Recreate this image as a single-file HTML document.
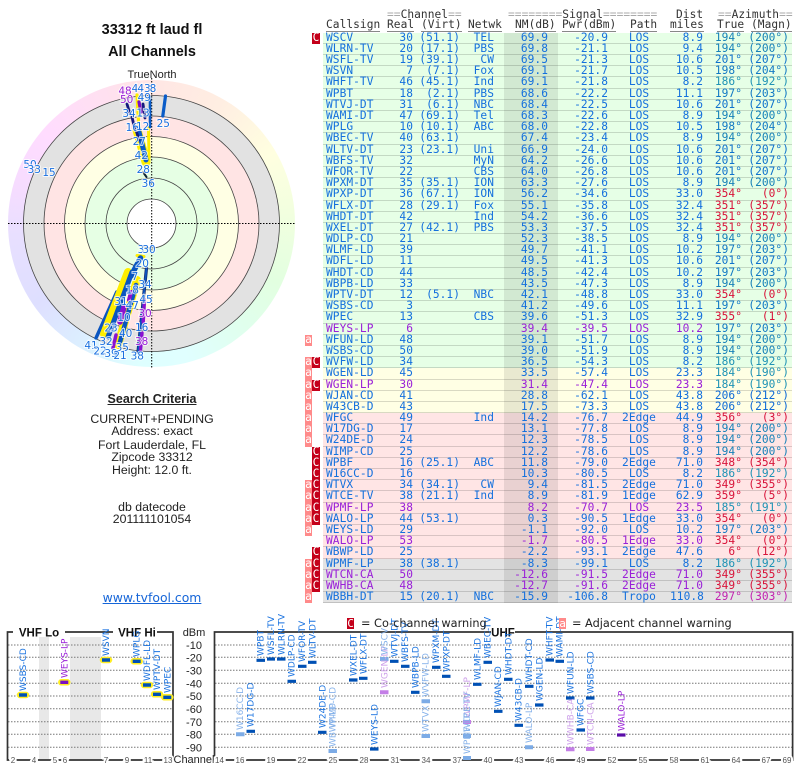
<!DOCTYPE html>
<html><head><meta charset="utf-8"><title>33312 ft laud fl</title>
<style>
html,body{margin:0;padding:0;background:#fff}
#p{position:relative;width:800px;height:768px;overflow:hidden;background:#fff;font-family:"Liberation Sans",sans-serif}
.t{position:absolute;left:0;width:304px;text-align:center;color:#222;font-size:12.3px;line-height:14px;white-space:nowrap}
.h1{font-weight:bold;font-size:14.5px;line-height:18px;color:#111}
#rim{position:absolute;left:8px;top:80px;width:287px;height:287px;border-radius:50%;background:conic-gradient(#ffe6e4,#ffeee2 30deg,#ffffe0 60deg,#f2ffdf 85deg,#e2ffe0 115deg,#e0ffee 140deg,#e0ffff 165deg,#deffff 185deg,#dcefff 210deg,#dedfff 235deg,#e8dfff 265deg,#f6dcff 285deg,#ffdcff 310deg,#ffe0f0 340deg,#ffe6e4)}
svg{position:absolute;left:0;top:0}
#tb{position:absolute;left:323px;top:32.7px;width:469px;font:11.2px/10.5px "DejaVu Sans Mono","Liberation Mono",monospace;letter-spacing:.05px;color:#1470dd}
.r{position:relative;display:grid;grid-template-columns:62px 28px 47px 44px 54px 50px 62px 33px 39px 47px 3px;height:11.19px;box-sizing:border-box;box-shadow:inset 0 -1px rgba(0,0,0,.15);background:#e6ffe6;white-space:nowrap}
.r i{font-style:normal;text-align:right;display:block;height:11.19px;line-height:10.8px}
.r i:nth-of-type(1){text-align:left;padding-left:3px}
.r i:nth-of-type(4){padding-right:10px}
.r i:nth-of-type(5){padding-right:10px;background:rgba(0,0,0,.085)}
.r i:nth-of-type(7){text-align:center}
.y{background:#ffffe4}.k{background:#ffe5e5}.g{background:#e3e3e3}
.p i{color:#9a20d8}
.r i.a1{color:#1f93b5}.r i.a2{color:#1681b8}.r i.a3{color:#1279c4}.r i.a4{color:#0f72cc}.r i.a5{color:#106ad6}.r i.rd{color:#d8143a}.r i.mg{color:#c222b0}
.r u{position:absolute;top:0;height:11.19px;text-decoration:none;color:#fff;text-align:center;line-height:10.8px;width:7px}
.r u.a{left:-18px;background:#ff8a8a}
.r u.c{left:-11px;background:#c4001a;width:8px}
.hd{position:absolute;font:11.2px/12px "DejaVu Sans Mono","Liberation Mono",monospace;letter-spacing:.05px;color:#333;white-space:pre}
.hd s{text-decoration:none;color:#aaa}
.ul{border-bottom:1px solid #888;height:12px}
.lb{font:10.5px "DejaVu Sans",sans-serif;fill:#1a70e0;stroke:#fff;stroke-width:2px;stroke-opacity:.75;paint-order:stroke;text-anchor:middle}
.pl{fill:#9a20d8}
.l{font:9px "DejaVu Sans",sans-serif;fill:#1a73e0}
.lp{fill:#9a20d8}
.ll{fill:#86b2ea}
.lq{fill:#cda0ea}
.ax{font:8px "Liberation Sans",sans-serif;fill:#555;stroke:#fff;stroke-width:4px;paint-order:stroke;text-anchor:middle}
.db{font:11px "Liberation Sans",sans-serif;fill:#222;text-anchor:middle}
.ti{font:bold 11.5px "Liberation Sans",sans-serif;fill:#111;text-anchor:middle}
.lg{position:absolute;font:11.3px/12px "DejaVu Sans",sans-serif;color:#222;white-space:pre}
.bx{position:absolute;color:#fff;font:11px/11px "DejaVu Sans Mono",monospace;text-align:center}
</style></head><body><div id="p">

<div class="t h1" style="top:21px">33312 ft laud fl</div>
<div class="t h1" style="top:43px">All Channels</div>
<div class="t" style="top:68px;font-size:11px">TrueNorth</div>

<div id="rim"></div>
<svg width="310" height="380" viewBox="0 0 310 380">
<g fill="none" stroke="#444" stroke-width=".8">
<circle cx="151.5" cy="223.5" r="128" fill="#e2e2e2"/>
<circle cx="151.5" cy="223.5" r="107.5" fill="#ffe4e4"/>
<circle cx="151.5" cy="223.5" r="87" fill="#ffffe4"/>
<circle cx="151.5" cy="223.5" r="66.5" fill="#e6ffe4"/>
<circle cx="151.5" cy="223.5" r="45.5" fill="#e6ffe4"/>
<circle cx="151.5" cy="223.5" r="24.5" fill="#fff"/>
</g>
<path d="M8 223.5H296M151.7 78V368" stroke="#000" stroke-width="1" stroke-dasharray="1.5 1.5" fill="none"/>
<!-- upper beams -->
<g fill="none" stroke-linecap="round">
<path d="M137 95L139 130" stroke="#ffee00" stroke-width="3.2"/>
<path d="M137 130L146 162" stroke="#ffee00" stroke-width="9"/>
<path d="M148.500 128L149 160" stroke="#ffee00" stroke-width="3"/>
<path d="M138 128L146 160" stroke="#0a5cc8" stroke-width="5"/>
<path d="M150 97L150 127" stroke="#0a5cc8" stroke-width="2.6"/>
<path d="M165.500 96L162.800 116" stroke="#0a5cc8" stroke-width="3.2"/>
<path d="M127 104L130 114M132 117L135 130M143 104L145 118M136 130L139 140" stroke="#141a80" stroke-width="2.8"/>
<path d="M139 102L141 112" stroke="#7a10c0" stroke-width="3.2"/>
<path d="M143 172L146.500 177" stroke="#123" stroke-width="2"/>
</g>
<!-- lower beams -->
<g fill="none" stroke-linecap="round">
<path d="M116.700 292L96 338" stroke="#0a55c0" stroke-width="3.4"/>
<path d="M128 272L104 334" stroke="#ffee00" stroke-width="8"/>
<path d="M137 255.500L144 256.500" stroke="#ffee00" stroke-width="3"/>
<path d="M140.500 258L131 276" stroke="#0a55c0" stroke-width="5.500"/>
<path d="M132 272L108 337" stroke="#0a55c0" stroke-width="5"/>
<path d="M137 280L118 345" stroke="#ffee00" stroke-width="8"/>
<path d="M136 285L120 342" stroke="#0a55c0" stroke-width="4.500"/>
<path d="M124 307L120 322" stroke="#8a12d0" stroke-width="5.500"/>
<path d="M131 292L129 300" stroke="#8a12d0" stroke-width="4"/>
<path d="M116 335L113 348" stroke="#8a12d0" stroke-width="3.500"/>
<path d="M146.500 268L138 352" stroke="#14256e" stroke-width="3.200"/>
<path d="M146.500 268L138 352" stroke="#0a55c0" stroke-width="1.800"/>
<path d="M144.500 300L143.200 322M142 333L140.500 350" stroke="#8a12d0" stroke-width="3.400"/>
</g>
<g>
<text class="lb pl" x="125" y="94.500">48</text>
<text class="lb pl" x="126.700" y="103">50</text>
<text class="lb" x="135" y="92">4</text>
<text class="lb" x="144" y="92">43</text>
<text class="lb" x="153" y="92">8</text>
<text class="lb" x="144.300" y="101">49</text>
<text class="lb" x="129" y="117">34</text>
<text class="lb" x="143" y="116.500">13</text>
<text class="lb" x="132.300" y="131">16</text>
<text class="lb" x="142.700" y="130">12</text>
<text class="lb" x="139.300" y="145">27</text>
<text class="lb" x="141.300" y="159">42</text>
<text class="lb" x="143.300" y="173">28</text>
<text class="lb" x="148.300" y="187">36</text>
<text class="lb" x="163.300" y="127">25</text>
<text class="lb" x="30" y="168">50</text>
<text class="lb" x="34.300" y="173">33</text>
<text class="lb" x="49" y="176">15</text>
<text class="lb" x="141" y="253">3</text>
<text class="lb" x="149" y="253">30</text>
<text class="lb" x="142.300" y="267">20</text>
<text class="lb" x="135" y="280">7</text>
<text class="lb" x="132.300" y="293.500">18</text>
<text class="lb" x="145" y="288">34</text>
<text class="lb" x="146" y="303">45</text>
<text class="lb" x="121" y="305">31</text>
<text class="lb" x="132.300" y="309">47</text>
<text class="lb pl" x="145" y="317">30</text>
<text class="lb" x="124" y="321">10</text>
<text class="lb" x="141.700" y="331">16</text>
<text class="lb" x="111" y="331.500">23</text>
<text class="lb" x="125.700" y="337">40</text>
<text class="lb" x="106" y="345">32</text>
<text class="lb pl" x="141.700" y="345">38</text>
<text class="lb" x="91" y="349">41</text>
<text class="lb" x="122.300" y="351">35</text>
<text class="lb" x="100" y="354.500">22</text>
<text class="lb" x="111" y="357">39</text>
<text class="lb" x="120" y="359">21</text>
<text class="lb" x="137.300" y="359.500">38</text>
</g>
</svg>

<div class="t" style="top:392px;font-weight:bold;font-size:12.5px;text-decoration:underline">Search Criteria</div>
<div class="t" style="top:412px">CURRENT+PENDING</div>
<div class="t" style="top:424px">Address: exact</div>
<div class="t" style="top:438px">Fort Lauderdale, FL</div>
<div class="t" style="top:450px">Zipcode 33312</div>
<div class="t" style="top:463px">Height: 12.0 ft.</div>
<div class="t" style="top:500px">db datecode</div>
<div class="t" style="top:512px">201111101054</div>
<div class="t" style="top:591px;font:12.4px/14px 'DejaVu Sans',sans-serif;color:#1565d8;text-decoration:underline">www.tvfool.com</div>

<!-- table header -->
<div class="hd" style="left:387px;top:8.500px"><s>==</s>Channel<s>==</s></div>
<div class="hd" style="left:508px;top:8.500px"><s>========</s>Signal<s>========</s></div>
<div class="hd" style="left:676px;top:8.500px">Dist</div>
<div class="hd" style="left:718px;top:8.500px"><s>==</s>Azimuth<s>==</s></div>
<div class="hd ul" style="left:326px;top:19px">Callsign</div>
<div class="hd ul" style="left:387px;top:19px">Real</div>
<div class="hd ul" style="left:421px;top:19px">(Virt)</div>
<div class="hd ul" style="left:468px;top:19px">Netwk</div>
<div class="hd ul" style="left:515px;top:19px">NM(dB)</div>
<div class="hd ul" style="left:562px;top:19px">Pwr(dBm)</div>
<div class="hd ul" style="left:630px;top:19px">Path</div>
<div class="hd ul" style="left:670px;top:19px">miles</div>
<div class="hd ul" style="left:717px;top:19px">True</div>
<div class="hd ul" style="left:751px;top:19px">(Magn)</div>

<div id="tb">
<div class="r"><u class="c">C</u><i>WSCV</i><i>30</i><i>(51.1)</i><i>TEL</i><i>69.9</i><i>-20.9</i><i>LOS</i><i>8.9</i><i class="a2">194°</i><i class="a2">(200°)</i></div>
<div class="r"><i>WLRN-TV</i><i>20</i><i>(17.1)</i><i>PBS</i><i>69.8</i><i>-21.1</i><i>LOS</i><i>9.4</i><i class="a2">194°</i><i class="a2">(200°)</i></div>
<div class="r"><i>WSFL-TV</i><i>19</i><i>(39.1)</i><i>CW</i><i>69.5</i><i>-21.3</i><i>LOS</i><i>10.6</i><i class="a4">201°</i><i class="a4">(207°)</i></div>
<div class="r"><i>WSVN</i><i>7</i><i>(7.1)</i><i>Fox</i><i>69.1</i><i>-21.7</i><i>LOS</i><i>10.5</i><i class="a3">198°</i><i class="a3">(204°)</i></div>
<div class="r"><i>WHFT-TV</i><i>46</i><i>(45.1)</i><i>Ind</i><i>69.1</i><i>-21.8</i><i>LOS</i><i>8.2</i><i class="a1">186°</i><i class="a1">(192°)</i></div>
<div class="r"><i>WPBT</i><i>18</i><i>(2.1)</i><i>PBS</i><i>68.6</i><i>-22.2</i><i>LOS</i><i>11.1</i><i class="a3">197°</i><i class="a3">(203°)</i></div>
<div class="r"><i>WTVJ-DT</i><i>31</i><i>(6.1)</i><i>NBC</i><i>68.4</i><i>-22.5</i><i>LOS</i><i>10.6</i><i class="a4">201°</i><i class="a4">(207°)</i></div>
<div class="r"><i>WAMI-DT</i><i>47</i><i>(69.1)</i><i>Tel</i><i>68.3</i><i>-22.6</i><i>LOS</i><i>8.9</i><i class="a2">194°</i><i class="a2">(200°)</i></div>
<div class="r"><i>WPLG</i><i>10</i><i>(10.1)</i><i>ABC</i><i>68.0</i><i>-22.8</i><i>LOS</i><i>10.5</i><i class="a3">198°</i><i class="a3">(204°)</i></div>
<div class="r"><i>WBEC-TV</i><i>40</i><i>(63.1)</i><i></i><i>67.4</i><i>-23.4</i><i>LOS</i><i>8.9</i><i class="a2">194°</i><i class="a2">(200°)</i></div>
<div class="r"><i>WLTV-DT</i><i>23</i><i>(23.1)</i><i>Uni</i><i>66.9</i><i>-24.0</i><i>LOS</i><i>10.6</i><i class="a4">201°</i><i class="a4">(207°)</i></div>
<div class="r"><i>WBFS-TV</i><i>32</i><i></i><i>MyN</i><i>64.2</i><i>-26.6</i><i>LOS</i><i>10.6</i><i class="a4">201°</i><i class="a4">(207°)</i></div>
<div class="r"><i>WFOR-TV</i><i>22</i><i></i><i>CBS</i><i>64.0</i><i>-26.8</i><i>LOS</i><i>10.6</i><i class="a4">201°</i><i class="a4">(207°)</i></div>
<div class="r"><i>WPXM-DT</i><i>35</i><i>(35.1)</i><i>ION</i><i>63.3</i><i>-27.6</i><i>LOS</i><i>8.9</i><i class="a2">194°</i><i class="a2">(200°)</i></div>
<div class="r"><i>WPXP-DT</i><i>36</i><i>(67.1)</i><i>ION</i><i>56.2</i><i>-34.6</i><i>LOS</i><i>33.0</i><i class="rd">354°</i><i class="rd">(0°)</i></div>
<div class="r"><i>WFLX-DT</i><i>28</i><i>(29.1)</i><i>Fox</i><i>55.1</i><i>-35.8</i><i>LOS</i><i>32.4</i><i class="rd">351°</i><i class="rd">(357°)</i></div>
<div class="r"><i>WHDT-DT</i><i>42</i><i></i><i>Ind</i><i>54.2</i><i>-36.6</i><i>LOS</i><i>32.4</i><i class="rd">351°</i><i class="rd">(357°)</i></div>
<div class="r"><i>WXEL-DT</i><i>27</i><i>(42.1)</i><i>PBS</i><i>53.3</i><i>-37.5</i><i>LOS</i><i>32.4</i><i class="rd">351°</i><i class="rd">(357°)</i></div>
<div class="r"><i>WDLP-CD</i><i>21</i><i></i><i></i><i>52.3</i><i>-38.5</i><i>LOS</i><i>8.9</i><i class="a2">194°</i><i class="a2">(200°)</i></div>
<div class="r"><i>WLMF-LD</i><i>39</i><i></i><i></i><i>49.7</i><i>-41.1</i><i>LOS</i><i>10.2</i><i class="a3">197°</i><i class="a3">(203°)</i></div>
<div class="r"><i>WDFL-LD</i><i>11</i><i></i><i></i><i>49.5</i><i>-41.3</i><i>LOS</i><i>10.6</i><i class="a4">201°</i><i class="a4">(207°)</i></div>
<div class="r"><i>WHDT-CD</i><i>44</i><i></i><i></i><i>48.5</i><i>-42.4</i><i>LOS</i><i>10.2</i><i class="a3">197°</i><i class="a3">(203°)</i></div>
<div class="r"><i>WBPB-LD</i><i>33</i><i></i><i></i><i>43.5</i><i>-47.3</i><i>LOS</i><i>8.9</i><i class="a2">194°</i><i class="a2">(200°)</i></div>
<div class="r"><i>WPTV-DT</i><i>12</i><i>(5.1)</i><i>NBC</i><i>42.1</i><i>-48.8</i><i>LOS</i><i>33.0</i><i class="rd">354°</i><i class="rd">(0°)</i></div>
<div class="r"><i>WSBS-CD</i><i>3</i><i></i><i></i><i>41.2</i><i>-49.6</i><i>LOS</i><i>11.1</i><i class="a3">197°</i><i class="a3">(203°)</i></div>
<div class="r"><i>WPEC</i><i>13</i><i></i><i>CBS</i><i>39.6</i><i>-51.3</i><i>LOS</i><i>32.9</i><i class="rd">355°</i><i class="rd">(1°)</i></div>
<div class="r p"><i>WEYS-LP</i><i>6</i><i></i><i></i><i>39.4</i><i>-39.5</i><i>LOS</i><i>10.2</i><i class="a3">197°</i><i class="a3">(203°)</i></div>
<div class="r"><u class="a">a</u><i>WFUN-LD</i><i>48</i><i></i><i></i><i>39.1</i><i>-51.7</i><i>LOS</i><i>8.9</i><i class="a2">194°</i><i class="a2">(200°)</i></div>
<div class="r"><i>WSBS-CD</i><i>50</i><i></i><i></i><i>39.0</i><i>-51.9</i><i>LOS</i><i>8.9</i><i class="a2">194°</i><i class="a2">(200°)</i></div>
<div class="r"><u class="a">a</u><u class="c">C</u><i>WVFW-LD</i><i>34</i><i></i><i></i><i>36.5</i><i>-54.3</i><i>LOS</i><i>8.2</i><i class="a1">186°</i><i class="a1">(192°)</i></div>
<div class="r y"><u class="a">a</u><i>WGEN-LD</i><i>45</i><i></i><i></i><i>33.5</i><i>-57.4</i><i>LOS</i><i>23.3</i><i class="a1">184°</i><i class="a1">(190°)</i></div>
<div class="r y p"><u class="a">a</u><u class="c">C</u><i>WGEN-LP</i><i>30</i><i></i><i></i><i>31.4</i><i>-47.4</i><i>LOS</i><i>23.3</i><i class="a1">184°</i><i class="a1">(190°)</i></div>
<div class="r y"><u class="a">a</u><i>WJAN-CD</i><i>41</i><i></i><i></i><i>28.8</i><i>-62.1</i><i>LOS</i><i>43.8</i><i class="a5">206°</i><i class="a5">(212°)</i></div>
<div class="r y"><u class="a">a</u><i>W43CB-D</i><i>43</i><i></i><i></i><i>17.5</i><i>-73.3</i><i>LOS</i><i>43.8</i><i class="a5">206°</i><i class="a5">(212°)</i></div>
<div class="r k"><u class="a">a</u><i>WFGC</i><i>49</i><i></i><i>Ind</i><i>14.2</i><i>-76.7</i><i>2Edge</i><i>44.9</i><i class="rd">356°</i><i class="rd">(3°)</i></div>
<div class="r k"><u class="a">a</u><i>W17DG-D</i><i>17</i><i></i><i></i><i>13.1</i><i>-77.8</i><i>LOS</i><i>8.9</i><i class="a2">194°</i><i class="a2">(200°)</i></div>
<div class="r k"><u class="a">a</u><i>W24DE-D</i><i>24</i><i></i><i></i><i>12.3</i><i>-78.5</i><i>LOS</i><i>8.9</i><i class="a2">194°</i><i class="a2">(200°)</i></div>
<div class="r k"><u class="c">C</u><i>WIMP-CD</i><i>25</i><i></i><i></i><i>12.2</i><i>-78.6</i><i>LOS</i><i>8.9</i><i class="a2">194°</i><i class="a2">(200°)</i></div>
<div class="r k"><u class="c">C</u><i>WPBF</i><i>16</i><i>(25.1)</i><i>ABC</i><i>11.8</i><i>-79.0</i><i>2Edge</i><i>71.0</i><i class="rd">348°</i><i class="rd">(354°)</i></div>
<div class="r k"><u class="c">C</u><i>W16CC-D</i><i>16</i><i></i><i></i><i>10.3</i><i>-80.5</i><i>LOS</i><i>8.2</i><i class="a1">186°</i><i class="a1">(192°)</i></div>
<div class="r k"><u class="a">a</u><u class="c">C</u><i>WTVX</i><i>34</i><i>(34.1)</i><i>CW</i><i>9.4</i><i>-81.5</i><i>2Edge</i><i>71.0</i><i class="rd">349°</i><i class="rd">(355°)</i></div>
<div class="r k"><u class="a">a</u><u class="c">C</u><i>WTCE-TV</i><i>38</i><i>(21.1)</i><i>Ind</i><i>8.9</i><i>-81.9</i><i>1Edge</i><i>62.9</i><i class="rd">359°</i><i class="rd">(5°)</i></div>
<div class="r k p"><u class="a">a</u><u class="c">C</u><i>WPMF-LP</i><i>38</i><i></i><i></i><i>8.2</i><i>-70.7</i><i>LOS</i><i>23.5</i><i class="a1">185°</i><i class="a1">(191°)</i></div>
<div class="r k"><u class="a">a</u><u class="c">C</u><i>WALO-LP</i><i>44</i><i>(53.1)</i><i></i><i>0.3</i><i>-90.5</i><i>1Edge</i><i>33.0</i><i class="rd">354°</i><i class="rd">(0°)</i></div>
<div class="r k"><u class="a">a</u><i>WEYS-LD</i><i>29</i><i></i><i></i><i>-1.1</i><i>-92.0</i><i>LOS</i><i>10.2</i><i class="a3">197°</i><i class="a3">(203°)</i></div>
<div class="r k p"><i>WALO-LP</i><i>53</i><i></i><i></i><i>-1.7</i><i>-80.5</i><i>1Edge</i><i>33.0</i><i class="rd">354°</i><i class="rd">(0°)</i></div>
<div class="r k"><u class="c">C</u><i>WBWP-LD</i><i>25</i><i></i><i></i><i>-2.2</i><i>-93.1</i><i>2Edge</i><i>47.6</i><i class="rd">6°</i><i class="rd">(12°)</i></div>
<div class="r g"><u class="a">a</u><u class="c">C</u><i>WPMF-LP</i><i>38</i><i>(38.1)</i><i></i><i>-8.3</i><i>-99.1</i><i>LOS</i><i>8.2</i><i class="a1">186°</i><i class="a1">(192°)</i></div>
<div class="r g p"><u class="a">a</u><u class="c">C</u><i>WTCN-CA</i><i>50</i><i></i><i></i><i>-12.6</i><i>-91.5</i><i>2Edge</i><i>71.0</i><i class="rd">349°</i><i class="rd">(355°)</i></div>
<div class="r g p"><u class="a">a</u><u class="c">C</u><i>WWHB-CA</i><i>48</i><i></i><i></i><i>-12.7</i><i>-91.6</i><i>2Edge</i><i>71.0</i><i class="rd">349°</i><i class="rd">(355°)</i></div>
<div class="r g"><u class="a">a</u><i>WBBH-DT</i><i>15</i><i>(20.1)</i><i>NBC</i><i>-15.9</i><i>-106.8</i><i>Tropo</i><i>110.8</i><i class="mg">297°</i><i class="mg">(303°)</i></div>
</div>

<!-- bottom chart -->
<svg width="800" height="768" viewBox="0 0 800 768" style="pointer-events:none">
<rect x="39" y="637" width="10" height="123" fill="#e8e8e8"/>
<rect x="70" y="637" width="31" height="123" fill="#e8e8e8"/>
<g stroke="#777" stroke-width="1" stroke-dasharray="1.5 1.5" fill="none">
<path d="M8 645H173M8 657.300H173M8 670.300H173M8 683.300H173M8 696H173M8 708.700H173M8 721.700H173M8 734.300H173M8 747.300H173"/>
<path d="M215 645H792M215 657.300H792M215 670.300H792M215 683.300H792M215 696H792M215 708.700H792M215 721.700H792M215 734.300H792M215 747.300H792"/>
</g>
<g fill="none" stroke="#333" stroke-width="1.700">
<path d="M13 632H7.500V760H173V632H157M65 632H113"/>
<path d="M491 632H214.500V760H792.600V632H515"/>
</g>
<text class="ti" x="39" y="636.500">VHF Lo</text>
<text class="ti" x="137" y="636.500">VHF Hi</text>
<text class="ti" x="503" y="636.500">UHF</text>
<g>
<text class="db" x="194" y="636">dBm</text>
<text class="db" x="194" y="649">-10</text><text class="db" x="194" y="661.500">-20</text><text class="db" x="194" y="674.500">-30</text><text class="db" x="194" y="687.500">-40</text><text class="db" x="194" y="700">-50</text><text class="db" x="194" y="713">-60</text><text class="db" x="194" y="726">-70</text><text class="db" x="194" y="738.500">-80</text><text class="db" x="194" y="751.500">-90</text>
<text class="db" x="194" y="763">Channel</text>
</g>
<g>
<text class="ax" x="13" y="763">2</text><text class="ax" x="34" y="763">4</text><text class="ax" x="55" y="763">5</text><text class="ax" x="65" y="763">6</text><text class="ax" x="106" y="763">7</text><text class="ax" x="127" y="763">9</text><text class="ax" x="148" y="763">11</text><text class="ax" x="168" y="763">13</text>
<text class="ax" x="219.500" y="763">14</text><text class="ax" x="240" y="763">16</text><text class="ax" x="271" y="763">19</text><text class="ax" x="302" y="763">22</text><text class="ax" x="333" y="763">25</text><text class="ax" x="364" y="763">28</text><text class="ax" x="395" y="763">31</text><text class="ax" x="426" y="763">34</text><text class="ax" x="457" y="763">37</text><text class="ax" x="488" y="763">40</text><text class="ax" x="519" y="763">43</text><text class="ax" x="550" y="763">46</text><text class="ax" x="581" y="763">49</text><text class="ax" x="612" y="763">52</text><text class="ax" x="643" y="763">55</text><text class="ax" x="674" y="763">58</text><text class="ax" x="705" y="763">61</text><text class="ax" x="736" y="763">64</text><text class="ax" x="766" y="763">67</text><text class="ax" x="787" y="763">69</text>
</g>
<!-- VHF marks -->
<g fill="none" stroke="#ffee22" stroke-width="6.500" stroke-linecap="round">
<path d="M20 695H26M61.300 682.300H67.300M103 660H109M133.700 661.300H139.700M144 685H150M154 694.300H160M164.300 697.300H170.300"/>
</g>
<g stroke-width="3.400" fill="none">
<path stroke="#0050b4" d="M19 695H27M102 660H110M132.700 661.300H140.700M143 685H151M153 694.300H161M163.300 697.300H171.300"/>
<path stroke="#7a10c0" d="M60.300 682.300H68.300"/>
</g>
<text class="l" transform="translate(26,691)rotate(-90)">WSBS-CD</text>
<text class="l lp" transform="translate(67.300,678)rotate(-90)">WEYS-LP</text>
<text class="l" transform="translate(109,656)rotate(-90)">WSVN</text>
<text class="l" transform="translate(139.700,657)rotate(-90)">WPLG</text>
<text class="l" transform="translate(150,681)rotate(-90)">WDFL-LD</text>
<text class="l" transform="translate(160,690)rotate(-90)">WPTV-DT</text>
<text class="l" transform="translate(170.300,693)rotate(-90)">WPEC</text>
<!-- UHF marks -->
<g stroke-width="3.200" fill="none">
<path stroke="#7cabe6" stroke-width="4" d="M236 734.300H244.500M328.500 751H337M380 659H388.500M421.500 701.300H430M421.500 736H430M463 736H471M463 758H471M525 747.300H533"/>
<path stroke="#c37ee6" stroke-width="4" d="M380 692.300H388.500M463 722H471M566 749.300H574.500M586 749H594.500"/>
<path stroke="#0050b4" d="M246.500 731.300H255M256.500 660.300H265M267 659H275M277 659H285.500M287.500 681.300H296M298 666.300H306.500M308 662.300H316.500M318 732.300H326.500M349 680H357.500M359 678.300H367.500M370 749H378.500M390 661.300H398.500M401 666.300H409.500M411 692.300H419.500M432 667.300H440.500M442 676.300H450.500M473 684.300H481.500M483.500 662.300H492M504 679.300H512.500M494 711.300H502.500M514.500 725.300H523M525 686.300H533.500M535 705H543.500M545.500 660H554M555.500 661.300H564M566 698H574.500M576.500 730H585M586 698H594.500"/>
<path stroke="#5a0ca8" d="M617 735H625.500"/>
</g>
<g>
<text class="l ll" transform="translate(243,730)rotate(-90)">W16CC-D</text>
<text class="l" transform="translate(253.700,727)rotate(-90)">W17DG-D</text>
<text class="l" transform="translate(263.700,656)rotate(-90)">WPBT</text>
<text class="l" transform="translate(274,655)rotate(-90)">WSFL-TV</text>
<text class="l" transform="translate(284.300,655)rotate(-90)">WLRN-TV</text>
<text class="l" transform="translate(294.700,677)rotate(-90)">WDLP-CD</text>
<text class="l" transform="translate(305,662)rotate(-90)">WFOR-TV</text>
<text class="l" transform="translate(315.300,658)rotate(-90)">WLTV-DT</text>
<text class="l" transform="translate(325.300,728)rotate(-90)">W24DE-D</text>
<text class="l ll" transform="translate(335.700,747)rotate(-90)">WBWP-LD</text>
<text class="l ll" transform="translate(335.700,728)rotate(-90)">WIMP-CD</text>
<text class="l" transform="translate(356.300,676)rotate(-90)">WXEL-DT</text>
<text class="l" transform="translate(366.300,674)rotate(-90)">WFLX-DT</text>
<text class="l" transform="translate(377.300,745)rotate(-90)">WEYS-LD</text>
<text class="l lq" transform="translate(387.300,688)rotate(-90)">WGEN-LP</text>
<text class="l ll" transform="translate(387.300,655)rotate(-90)">WSCV</text>
<text class="l" transform="translate(397.300,657)rotate(-90)">WTVJ-DT</text>
<text class="l" transform="translate(408,662)rotate(-90)">WBFS-TV</text>
<text class="l" transform="translate(418.300,688)rotate(-90)">WBPB-LD</text>
<text class="l ll" transform="translate(428.700,697)rotate(-90)">WVFW-LD</text>
<text class="l ll" transform="translate(428.700,732)rotate(-90)">WTVX</text>
<text class="l" transform="translate(439,663)rotate(-90)">WPXM-DT</text>
<text class="l" transform="translate(449.300,672)rotate(-90)">WPXP-DT</text>
<text class="l lq" transform="translate(470,718)rotate(-90)">WPMF-LP</text>
<text class="l ll" transform="translate(470,754)rotate(-90)">WPMF-LP</text>
<text class="l ll" transform="translate(470,732)rotate(-90)">WTCE-TV</text>
<text class="l" transform="translate(480.300,680)rotate(-90)">WLMF-LD</text>
<text class="l" transform="translate(490.700,658)rotate(-90)">WBEC-TV</text>
<text class="l" transform="translate(511.300,675)rotate(-90)">WHDT-DT</text>
<text class="l" transform="translate(501,707)rotate(-90)">WJAN-CD</text>
<text class="l" transform="translate(521.700,721)rotate(-90)">W43CB-D</text>
<text class="l ll" transform="translate(532,743)rotate(-90)">WALO-LP</text>
<text class="l" transform="translate(532,682)rotate(-90)">WHDT-CD</text>
<text class="l" transform="translate(542.300,701)rotate(-90)">WGEN-LD</text>
<text class="l" transform="translate(552.700,656)rotate(-90)">WHFT-TV</text>
<text class="l" transform="translate(562.700,657)rotate(-90)">WAMI-DT</text>
<text class="l" transform="translate(573.300,694)rotate(-90)">WFUN-LD</text>
<text class="l lq" transform="translate(573.300,745)rotate(-90)">WWHB-CA</text>
<text class="l" transform="translate(583.700,726)rotate(-90)">WFGC</text>
<text class="l" transform="translate(593.300,694)rotate(-90)">WSBS-CD</text>
<text class="l lq" transform="translate(593.300,745)rotate(-90)">WTCN-CA</text>
<text class="l lp" transform="translate(624.300,731)rotate(-90)">WALO-LP</text>
</g>
</svg>

<div class="bx" style="left:347px;top:618px;width:7px;height:11px;background:#c4001a">C</div>
<div class="lg" style="left:361px;top:618px">= Co-channel warning</div>
<div class="bx" style="left:559px;top:618px;width:7px;height:11px;background:#ff8a8a">a</div>
<div class="lg" style="left:572px;top:618px">= Adjacent channel warning</div>

</div></body></html>
